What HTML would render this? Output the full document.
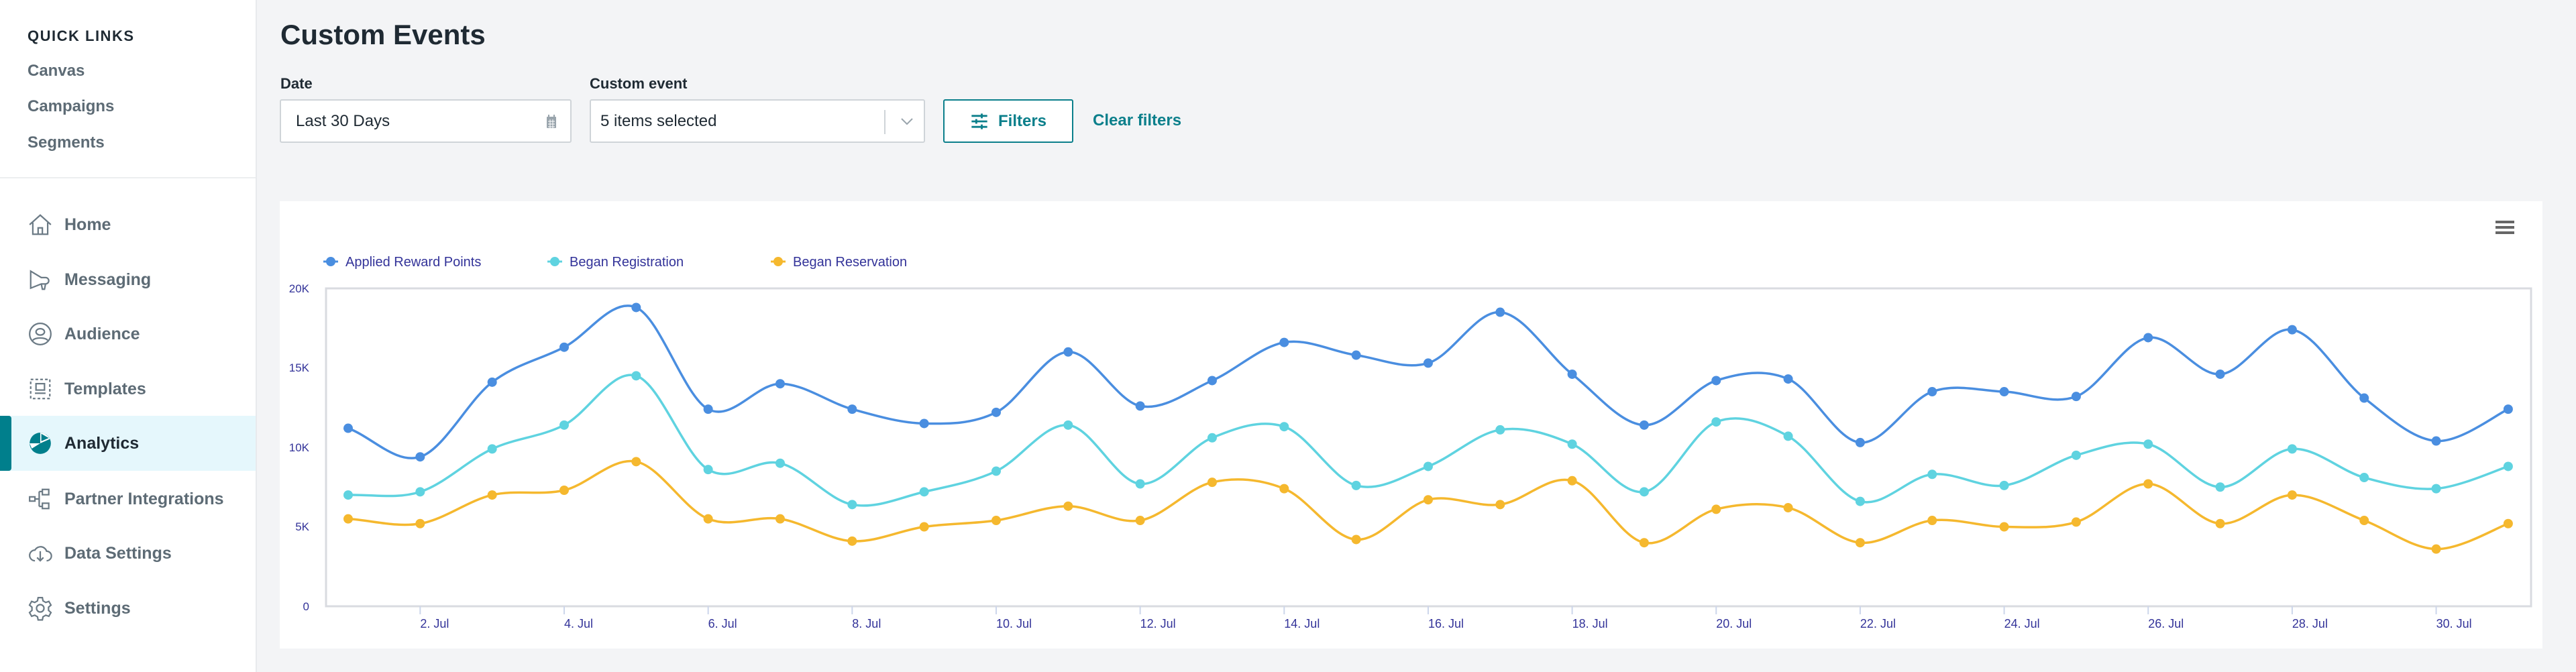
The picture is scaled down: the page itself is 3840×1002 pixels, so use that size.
<!DOCTYPE html>
<html><head><meta charset="utf-8"><style>
*{box-sizing:border-box;margin:0;padding:0}
body{width:3840px;height:1002px;background:#f3f4f6;font-family:"Liberation Sans",sans-serif;position:relative;overflow:hidden}
.side{position:absolute;left:0;top:0;width:383px;height:1002px;background:#fff;border-right:2px solid #e8eaed}
.ql{position:absolute;left:41px;top:41px;font-size:22px;font-weight:bold;color:#1f2a33;letter-spacing:1.5px}
.qlink{position:absolute;left:41px;font-size:24px;font-weight:bold;color:#5d6b75}
.hr{position:absolute;left:0;top:264px;width:381px;height:2px;background:#eceef0}
.nav{position:absolute;left:0;width:381px;height:82px;display:flex;align-items:center}
.nav svg{position:absolute;left:41px;width:38px;height:38px}
.nav span{position:absolute;left:96px;font-size:25px;font-weight:bold;color:#5d6b75}
.nav.act{background:#e5f7fc}
.nav.act span{color:#1f2a33}
.bar{position:absolute;left:0;top:0;width:17px;height:82px;background:#007f8c;border-radius:0 4px 4px 0}
h1{position:absolute;left:418px;top:28px;font-size:42px;font-weight:bold;color:#1f2a33}
.lbl{position:absolute;top:112px;font-size:22px;font-weight:bold;color:#1f2a33}
.inp{position:absolute;top:148px;height:65px;background:#fff;border:2px solid #cfd4d8;border-radius:3px;font-size:24px;color:#1f2a33;display:flex;align-items:center;padding-left:22px}
.btn{position:absolute;left:1406px;top:148px;width:194px;height:65px;border:2px solid #0b7f8b;border-radius:3px;background:#fff;color:#0b7f8b;font-size:24px;font-weight:bold;display:flex;align-items:center;justify-content:center;gap:14px}
.clear{position:absolute;left:1629px;top:166px;font-size:24px;font-weight:bold;color:#0b7f8b}
.card{position:absolute;left:417px;top:300px;width:3373px;height:667px;background:#fff}
</style></head><body>
<div class="side">
<div class="ql">QUICK LINKS</div>
<div class="qlink" style="top:92px">Canvas</div>
<div class="qlink" style="top:145px">Campaigns</div>
<div class="qlink" style="top:199px">Segments</div>
<div class="hr"></div>
<div class="nav" style="top:294px"><svg viewBox="0 0 24 24" fill="none" stroke="#6b7a85" stroke-width="1.4"><path d="M2 12L12 3l10 9M5 10v11h14V10M10 21v-6h4v6"/></svg><span>Home</span></div>
<div class="nav" style="top:376px"><svg viewBox="0 0 24 24" fill="none" stroke="#6b7a85" stroke-width="1.4"><path d="M3 4v16l10-4h4a3 3 0 000-6h-4L3 4zM13 16l1 5h2l1-5"/></svg><span>Messaging</span></div>
<div class="nav" style="top:457px"><svg viewBox="0 0 24 24" fill="none" stroke="#6b7a85" stroke-width="1.4"><circle cx="12" cy="12" r="10"/><ellipse cx="12" cy="10" rx="4" ry="3"/><path d="M5 18c2-3 12-3 14 0"/></svg><span>Audience</span></div>
<div class="nav" style="top:539px"><svg viewBox="0 0 24 24" fill="none" stroke="#6b7a85" stroke-width="1.4" stroke-dasharray="2.5 2"><rect x="3" y="3" width="18" height="18"/><rect x="8" y="7" width="8" height="6" stroke-dasharray="none"/><path d="M7 16h10" stroke-dasharray="none"/></svg><span>Templates</span></div>
<div class="nav act" style="top:620px"><div class="bar"></div><svg viewBox="0 0 24 24"><circle cx="12" cy="12" r="10" fill="#007f8c"/><path d="M12 12V2a10 10 0 019 6z" fill="#fff"/><path d="M13 3v7l7-3" fill="#007f8c"/><path d="M2 12h10l-8 5" fill="#fff"/></svg><span>Analytics</span></div>
<div class="nav" style="top:703px"><svg viewBox="0 0 24 24" fill="none" stroke="#6b7a85" stroke-width="1.4"><rect x="2" y="10" width="5" height="4"/><rect x="14" y="3" width="6" height="5"/><rect x="14" y="16" width="6" height="5"/><path d="M7 12h4M11 5v14M11 5h3M11 19h3"/></svg><span>Partner Integrations</span></div>
<div class="nav" style="top:784px"><svg viewBox="0 0 24 24" fill="none" stroke="#6b7a85" stroke-width="1.4"><path d="M7 19a5 5 0 010-10 6 6 0 0111 1 4 4 0 010 9"/><path d="M12 10v9M9 16l3 3 3-3"/></svg><span>Data Settings</span></div>
<div class="nav" style="top:866px"><svg viewBox="0 0 24 24" fill="none" stroke="#6b7a85" stroke-width="1.4"><circle cx="12" cy="12" r="3.5"/><path d="M10 2h4l.6 3 2.6 1.5 2.9-1 2 3.5-2.3 2v3l2.3 2-2 3.5-2.9-1-2.6 1.5-.6 3h-4l-.6-3-2.6-1.5-2.9 1-2-3.5 2.3-2v-3l-2.3-2 2-3.5 2.9 1L9.4 5z"/></svg><span>Settings</span></div>
</div>
<h1>Custom Events</h1>
<div class="lbl" style="left:418px">Date</div>
<div class="lbl" style="left:879px">Custom event</div>
<div class="inp" style="left:417px;width:435px">Last 30 Days<svg style="position:absolute;right:20px" width="16" height="24" viewBox="0 0 16 24"><rect x="1" y="5" width="14" height="17" rx="1" fill="#9aa5ad"/><rect x="3" y="2" width="2" height="5" fill="#9aa5ad"/><rect x="11" y="2" width="2" height="5" fill="#9aa5ad"/><path d="M3 12h10M3 16h10M3 20h10M6 9v13M10 9v13" stroke="#fff" stroke-width="1"/></svg></div>
<div class="inp" style="left:879px;width:500px;padding-left:14px">5 items selected<div style="position:absolute;left:437px;top:14px;width:2px;height:36px;background:#cfd4d8"></div><svg style="position:absolute;left:460px" width="22" height="14" viewBox="0 0 22 14"><path d="M3 3l8 8 8-8" fill="none" stroke="#9aa5ad" stroke-width="2"/></svg></div>
<div class="btn"><svg width="28" height="28" viewBox="0 0 24 24" stroke="#0b7f8b" stroke-width="2.4"><path d="M2 5h20M2 12h20M2 19h20M15 2v6M8 9v6M15 16v6"/></svg>Filters</div>
<div class="clear">Clear filters</div>
<div class="card"></div>
<svg id="ch" style="position:absolute;left:0;top:0" width="3840" height="1002" font-family="Liberation Sans, sans-serif">
<g stroke="#666" stroke-width="4"><path d="M3720 331h28M3720 339h28M3720 347h28"/></g>
<g font-size="20" fill="#333399">
<circle cx="493" cy="390" r="7" fill="#4a8ee0"/><path d="M482 390h22" stroke="#4a8ee0" stroke-width="3"/><text x="515" y="397">Applied Reward Points</text>
<circle cx="827" cy="390" r="7" fill="#5fd3e0"/><path d="M816 390h22" stroke="#5fd3e0" stroke-width="3"/><text x="849" y="397">Began Registration</text>
<circle cx="1160" cy="390" r="7" fill="#f5b82e"/><path d="M1149 390h22" stroke="#f5b82e" stroke-width="3"/><text x="1182" y="397">Began Reservation</text>
</g>
<rect x="486" y="430" width="3287" height="474" fill="none" stroke="#d9dbe0" stroke-width="3"/>
<g font-size="17" fill="#333399" text-anchor="end">
<text x="461" y="436">20K</text><text x="461" y="554">15K</text><text x="461" y="673">10K</text><text x="461" y="791">5K</text><text x="461" y="910">0</text>
</g>
<g id="xl" font-size="18" fill="#333399"></g>
<g id="lines"></g>
</svg>
<script>
var B=[11.2,9.4,14.1,16.3,18.8,12.4,14.0,12.4,11.5,12.2,16.0,12.6,14.2,16.6,15.8,15.3,18.5,14.6,11.4,14.2,14.3,10.3,13.5,13.5,13.2,16.9,14.6,17.4,13.1,10.4,12.4];
var C=[7.0,7.2,9.9,11.4,14.5,8.6,9.0,6.4,7.2,8.5,11.4,7.7,10.6,11.3,7.6,8.8,11.1,10.2,7.2,11.6,10.7,6.6,8.3,7.6,9.5,10.2,7.5,9.9,8.1,7.4,8.8];
var Y=[5.5,5.2,7.0,7.3,9.1,5.5,5.5,4.1,5.0,5.4,6.3,5.4,7.8,7.4,4.2,6.7,6.4,7.9,4.0,6.1,6.2,4.0,5.4,5.0,5.3,7.7,5.2,7.0,5.4,3.6,5.2];
var NS="http://www.w3.org/2000/svg",g=document.getElementById('lines'),xl=document.getElementById('xl');
function X(i){return 519+i*107.33}function V(v){return 904-v/20*474}
for(var d=2;d<=30;d+=2){var x=X(d-1);var t=document.createElementNS(NS,'text');t.setAttribute('x',x);t.setAttribute('y',936);t.textContent=d+'. Jul';xl.appendChild(t);
var l=document.createElementNS(NS,'path');l.setAttribute('d','M'+x+' 904v12');l.setAttribute('stroke','#ccd6eb');l.setAttribute('stroke-width','2');xl.appendChild(l);}
function draw(a,col){var p=a.map(function(v,i){return[X(i),V(v)]});var d='M'+p[0][0]+' '+p[0][1];var k=1.5;
for(var i=0;i<p.length-1;i++){var p0=p[i-1]||p[i],p1=p[i],p2=p[i+1],p3=p[i+2]||p2;
var c1=[p1[0]+(p2[0]-p0[0])/(2*k*2),p1[1]+(p2[1]-p0[1])/(2*k*2)];var c2=[p2[0]-(p3[0]-p1[0])/(2*k*2),p2[1]-(p3[1]-p1[1])/(2*k*2)];
if(i==0){c1=[p1[0]+35,p1[1]+(p2[1]-p1[1])*0.3]}
d+=' C'+c1[0]+' '+c1[1]+' '+c2[0]+' '+c2[1]+' '+p2[0]+' '+p2[1];}
var e=document.createElementNS(NS,'path');e.setAttribute('d',d);e.setAttribute('fill','none');e.setAttribute('stroke',col);e.setAttribute('stroke-width','3.5');g.appendChild(e);
p.forEach(function(q){var c=document.createElementNS(NS,'circle');c.setAttribute('cx',q[0]);c.setAttribute('cy',q[1]);c.setAttribute('r',7);c.setAttribute('fill',col);g.appendChild(c)});}
draw(Y,'#f5b82e');draw(C,'#5fd3e0');draw(B,'#4a8ee0');
</script>
</body></html>
